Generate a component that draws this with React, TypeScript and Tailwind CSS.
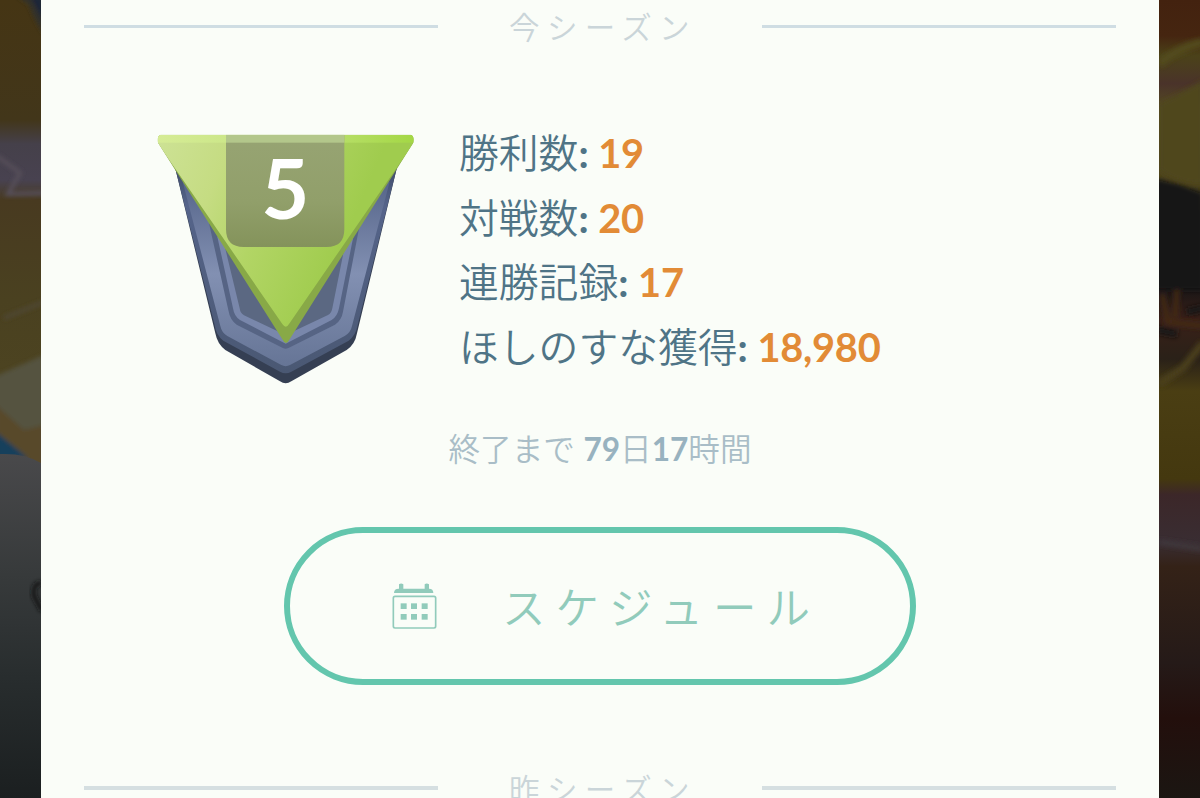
import React from 'react';

interface SeasonHeadingProps {
  title: string;
  lineClass: string;
}

const SeasonHeading: React.FC<SeasonHeadingProps> = ({ title, lineClass }) => (
  <div className="flex h-[52px] shrink-0 items-center justify-between px-[43px]">
    <div className={`w-[354px] ${lineClass}`} />
    <h2 className="whitespace-nowrap pl-[6px] pt-0.5 text-[30.5px] leading-[50px] tracking-[7.4px] font-[350] text-[#cad5d9]">
      {title}
    </h2>
    <div className={`w-[354px] ${lineClass}`} />
  </div>
);

interface StatRowProps {
  label: string;
  value: string;
}

const StatRow: React.FC<StatRowProps> = ({ label, value }) => (
  <div className="h-[64.5px] whitespace-nowrap text-[39.8px] leading-[64px] font-[350] text-[#4f7486]">
    {label}
    <span className="font-bold">: </span>
    <span className="font-bold tracking-[-0.3px] text-[#e28b36]">{value}</span>
  </div>
);

const RankBadge = ({ rank }: { rank: number }) => (
  <svg width="290" height="280" viewBox="0 0 870 840" className="shrink-0">
    <defs>
      <linearGradient id="green" x1="55" y1="50" x2="640" y2="300" gradientUnits="userSpaceOnUse">
        <stop offset="0" stopColor="#cde295" />
        <stop offset="0.33" stopColor="#c5dc82" />
        <stop offset="0.6" stopColor="#b2d565" />
        <stop offset="1" stopColor="#a0cc4e" />
      </linearGradient>
      <linearGradient id="topEdge" x1="0" x2="1" y1="0" y2="0">
        <stop offset="0" stopColor="#d6ec96" />
        <stop offset="0.5" stopColor="#c4e37f" />
        <stop offset="1" stopColor="#a2d742" />
      </linearGradient>
      <linearGradient id="steel" x1="0" x2="0" y1="0" y2="1">
        <stop offset="0" stopColor="#56658a" />
        <stop offset="0.5" stopColor="#8290b2" />
        <stop offset="1" stopColor="#667596" />
      </linearGradient>
      <linearGradient id="steelDark" x1="0" x2="0" y1="0" y2="1">
        <stop offset="0" stopColor="#3e4a66" />
        <stop offset="0.2" stopColor="#55648a" />
        <stop offset="1" stopColor="#4a5873" />
      </linearGradient>
      <linearGradient id="plate" x1="0" x2="0" y1="0" y2="1">
        <stop offset="0" stopColor="#97a473" />
        <stop offset="0.6" stopColor="#919f6a" />
        <stop offset="1" stopColor="#84935b" />
      </linearGradient>
      <clipPath id="triangle">
        <path d="M62 44H812Q824 48 820 68L449 658Q438 680 427 658L54 68Q50 48 62 44Z" />
      </clipPath>
    </defs>
    {/* Shield */}
    <path d="M102 130L226 640Q232 672 256 690L420 784Q437 796 454 784L620 690Q645 674 651 640L774 130Z" fill="#353f53" />
    <path d="M102 130L224 615Q228 645 250 662L420 755Q437 765 454 755L626 662Q648 645 653 615L774 130Z" fill="url(#steelDark)" />
    <path d="M128 185L241 618Q245 638 262 648L424 735Q437 742 450 735L614 648Q632 638 636 618L749 185Z" fill="url(#steel)" />
    <path d="M207 310L265 570Q270 600 290 614L424 682Q437 690 450 682L585 614Q605 600 609 575L660 310Z" fill="#566484" />
    <path d="M232 350L279 565Q283 590 300 600L437 671L575 600Q592 590 597 565L640 350Z" fill="#7987ab" />
    <path d="M252 370L299 565Q301 580 312 586L437 645L564 585Q574 580 577 565L616 370Z" fill="#5b6882" />
    {/* Face */}
    <g clipPath="url(#triangle)">
      <rect x="40" y="40" width="800" height="650" fill="#88a947" />
      <path d="M52 44H822V68L447 612Q438 628 427 612L52 68Z" fill="url(#green)" />
      <rect x="40" y="40" width="800" height="28" fill="url(#topEdge)" />
      <path d="M258 44H613V328Q613 381 560 381H311Q258 381 258 328Z" fill="url(#plate)" />
      <rect x="258" y="40" width="355" height="28" fill="#b3c78b" />
    </g>
    <text x="436" y="296" textAnchor="middle" fontSize="249" fontWeight="700" fill="#ffffff" className="font-[Lato]">
      {rank}
    </text>
  </svg>
);

const CalendarIcon = () => (
  <svg width="45" height="46" viewBox="0 0 135 138" fill="#91cbbb">
    <path d="M6 30Q6 17 20 17H21V4Q27 -1 34 4V17H98V4Q104 -1 111 4V17Q124 17 124 30Z" />
    <rect x="4" y="40" width="127" height="95" rx="5" fill="none" stroke="#91cbbb" strokeWidth="5" />
    {[61, 93].map((y) => [26, 57, 89].map((x) => <rect key={`${x}-${y}`} x={x} y={y} width="18" height="17" />))}
  </svg>
);

const LeftScenery = () => (
  <svg width="41" height="798" viewBox="0 0 41 798" className="block">
    <defs>
      <linearGradient id="leftTop" x1="0" x2="0" y1="0" y2="1">
        <stop offset="0" stopColor="#453514" />
        <stop offset="0.3" stopColor="#42361a" />
        <stop offset="0.36" stopColor="#45404a" />
        <stop offset="0.45" stopColor="#484250" />
        <stop offset="0.5" stopColor="#483a20" />
        <stop offset="0.75" stopColor="#4a4120" />
        <stop offset="1" stopColor="#4d4421" />
      </linearGradient>
      <linearGradient id="leftBottom" x1="0" x2="0" y1="0" y2="1">
        <stop offset="0" stopColor="#49494b" />
        <stop offset="0.35" stopColor="#373a3b" />
        <stop offset="0.65" stopColor="#282d2e" />
        <stop offset="1" stopColor="#1b1f20" />
      </linearGradient>
      <filter id="soft" x="-50%" y="-20%" width="200%" height="140%">
        <feGaussianBlur stdDeviation="2" />
      </filter>
    </defs>
    <rect width="41" height="400" fill="url(#leftTop)" />
    <g filter="url(#soft)">
      <path d="M17 -4H44V34Q35 22 29 5Z" fill="#33302c" />
      <path d="M30 -4H44V22Z" fill="#1d2538" />
      <path d="M-3 156L20 173L8 194L44 193" fill="none" stroke="#57505a" strokeWidth="4" />
      <path d="M4 318L44 302" stroke="#4f4734" strokeWidth="4" />
      <path d="M-4 376L44 355V440H-4Z" fill="#555341" />
      <path d="M-4 405L24 430L44 425V470H-4Z" fill="#58492a" />
      <path d="M-4 432L28 458H-4Z" fill="#193f5b" />
    </g>
    <path d="M0 454Q25 453 41 463V798H0Z" fill="url(#leftBottom)" />
    <path d="M42 583Q32 583 34 596L42 611" fill="none" stroke="#151918" strokeWidth="4" filter="url(#soft)" />
  </svg>
);

const RightScenery = () => (
  <svg width="41" height="798" viewBox="0 0 41 798" className="block">
    <defs>
      <linearGradient id="rightSide" x1="0" x2="0" y1="0" y2="1">
        <stop offset="0" stopColor="#43220f" />
        <stop offset="0.045" stopColor="#452510" />
        <stop offset="0.07" stopColor="#4b4219" />
        <stop offset="0.105" stopColor="#4a332a" />
        <stop offset="0.14" stopColor="#554e20" />
        <stop offset="0.23" stopColor="#4d431b" />
        <stop offset="0.27" stopColor="#191917" />
        <stop offset="0.36" stopColor="#181516" />
        <stop offset="0.4" stopColor="#392018" />
        <stop offset="0.45" stopColor="#2a2118" />
        <stop offset="0.49" stopColor="#4a3e13" />
        <stop offset="0.6" stopColor="#44380f" />
        <stop offset="0.62" stopColor="#3c2729" />
        <stop offset="0.68" stopColor="#392d32" />
        <stop offset="0.71" stopColor="#342217" />
        <stop offset="0.83" stopColor="#251a18" />
        <stop offset="0.9" stopColor="#230f0c" />
        <stop offset="1" stopColor="#1b1612" />
      </linearGradient>
      <filter id="haze" x="-50%" y="-20%" width="200%" height="140%">
        <feGaussianBlur stdDeviation="2.8" />
      </filter>
    </defs>
    <rect width="41" height="798" fill="url(#rightSide)" />
    <g filter="url(#haze)">
      <path d="M0 64Q18 48 44 42" fill="none" stroke="#524b1d" strokeWidth="8" />
      <path d="M0 104Q20 94 44 80V184Q20 186 0 170Z" fill="#4f461f" />
      <path d="M-4 178L20 184L44 193V290H-4Z" fill="#181817" />
      <path d="M3 294L9 322L44 326M18 290L16 318" fill="none" stroke="#452a19" strokeWidth="5" />
      <path d="M28 312L44 308M-2 330L18 334" stroke="#151313" strokeWidth="7" />
      <path d="M0 384L24 368L44 343" fill="none" stroke="#4c401a" strokeWidth="7" />
      <path d="M0 542L44 549" stroke="#3f383d" strokeWidth="5" />
    </g>
  </svg>
);

const stats: StatRowProps[] = [
  { label: '勝利数', value: '19' },
  { label: '対戦数', value: '20' },
  { label: '連勝記録', value: '17' },
  { label: 'ほしのすな獲得', value: '18,980' },
];

const App = () => {
  return (
    <div
      lang="ja"
      className="flex h-[798px] w-[1200px] overflow-hidden bg-[#222] font-[Lato,'Noto_Sans_CJK_JP',sans-serif]"
    >
      <aside className="w-[41px] shrink-0">
        <LeftScenery />
      </aside>

      <main className="flex h-[798px] w-[1118px] shrink-0 flex-col overflow-hidden bg-[#fafdf8]">
        <SeasonHeading title="今シーズン" lineClass="h-[3px] bg-[#cfdde3]" />

        <section className="mt-[68px] flex h-[280px] shrink-0 gap-[29px] pl-[99px]">
          <RankBadge rank={5} />
          <div className="pt-px">
            {stats.map((stat) => (
              <StatRow key={stat.label} {...stat} />
            ))}
          </div>
        </section>

        <p className="mt-6 h-[50px] shrink-0 text-center text-[31.6px] leading-[50px] font-[350] text-[#a9bdc7]">
          終了まで <b className="font-bold text-[#98b2bf]">79</b>日<b className="font-bold text-[#98b2bf]">17</b>時間
        </p>

        <button className="mx-auto mt-[53px] flex h-[158px] w-[632px] shrink-0 items-center rounded-full border-[6px] border-[#63c6ad] pl-[102px] text-[#91cbbb]">
          <CalendarIcon />
          <span className="ml-[65px] whitespace-nowrap pt-0.5 text-[43.5px] leading-[60px] font-[350] tracking-[10px]">
            スケジュール
          </span>
        </button>

        <div className="mt-[77px] shrink-0">
          <SeasonHeading title="昨シーズン" lineClass="h-1 bg-[#d5dfe1]" />
        </div>
      </main>

      <aside className="w-[41px] shrink-0">
        <RightScenery />
      </aside>
    </div>
  );
};

export default App;
